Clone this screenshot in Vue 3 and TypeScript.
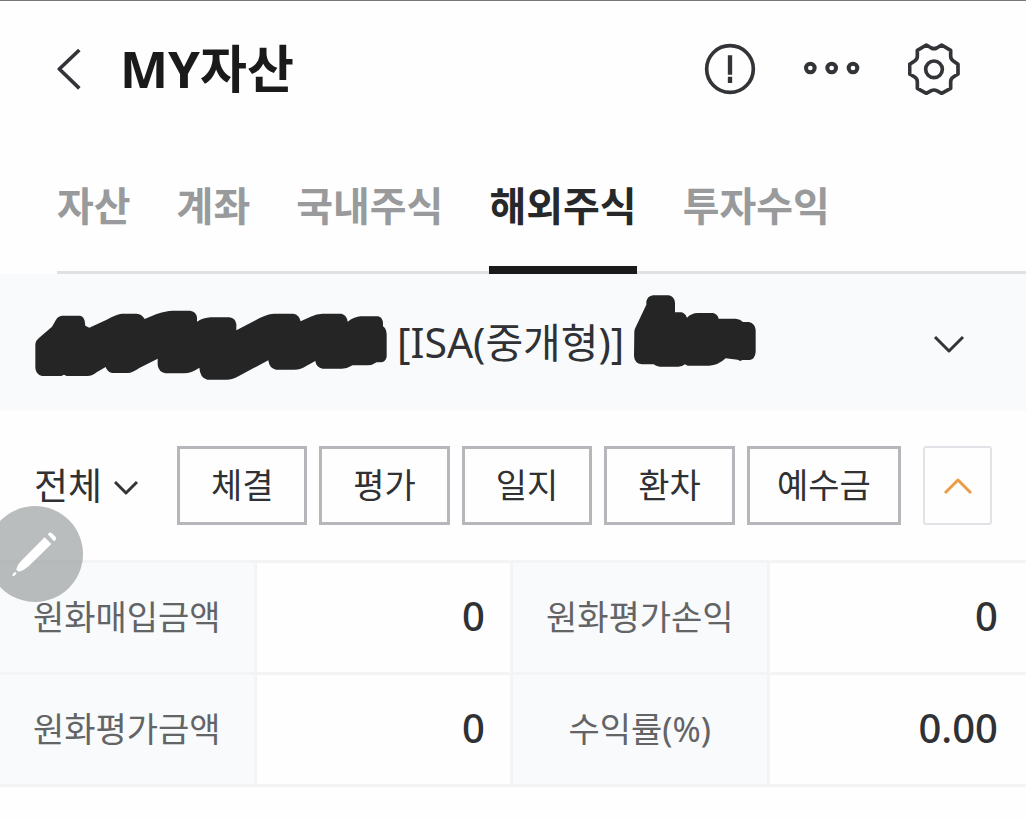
<script setup lang="ts">
import { ref } from 'vue'

interface Metric {
  label: string
  value: string
}

const tabs: string[] = ['자산', '계좌', '국내주식', '해외주식', '투자수익']
const activeTab = ref<string>('해외주식')

const actions: string[] = ['체결', '평가', '일지', '환차', '예수금']
const filter = ref<string>('전체')
const expanded = ref<boolean>(true)

const rows: Metric[][] = [
  [
    { label: '원화매입금액', value: '0' },
    { label: '원화평가손익', value: '0' },
  ],
  [
    { label: '원화평가금액', value: '0' },
    { label: '수익률(%)', value: '0.00' },
  ],
]
</script>

<template>
  <main class="page">
    <header class="header">
      <button class="icon-btn" type="button" aria-label="뒤로">
        <svg width="25" height="46" viewBox="171 137 75 138" class="line">
          <path d="M238 149 L178 206 L238 264" stroke-width="11" />
        </svg>
      </button>
      <h1 class="title">MY자산</h1>
      <div class="tools">
        <button class="icon-btn" type="button" aria-label="안내">
          <svg width="52" height="52" viewBox="71 68 156 156" class="line">
            <circle cx="149" cy="146" r="70" stroke-width="11" />
            <path d="M149 105 V163 M149 169 V188" stroke-width="13" />
          </svg>
        </button>
        <button class="icon-btn" type="button" aria-label="더보기">
          <svg width="58" height="52" viewBox="371 68 174 156" class="line">
            <circle cx="393" cy="143" r="13" stroke-width="12" />
            <circle cx="457" cy="143" r="13" stroke-width="12" />
            <circle cx="521" cy="143" r="13" stroke-width="12" />
          </svg>
        </button>
        <button class="icon-btn" type="button" aria-label="설정">
          <svg width="52" height="52" viewBox="686 68 156 156" class="line">
            <path
              stroke-width="11"
              d="M741 74 L756 83 Q764 87 772 83 L787 74 L814 90 V108 Q814 117 822 122 L836 132 V161 L822 170 Q814 175 814 184 V204 L787 219 L772 211 Q764 207 756 211 L741 219 L714 204 V184 Q714 175 706 170 L691 161 V132 L706 122 Q714 117 714 108 V90 Z"
            />
            <circle cx="764" cy="147" r="25" stroke-width="11" />
          </svg>
        </button>
      </div>
    </header>

    <nav class="tabs">
      <button
        v-for="tab in tabs"
        :key="tab"
        type="button"
        class="tab"
        :class="{ active: tab === activeTab }"
        @click="activeTab = tab"
      >
        {{ tab }}
      </button>
    </nav>

    <button class="account" type="button">
      <svg width="352" height="95" viewBox="47 45 1056 285" class="mask" aria-hidden="true">
        <path
          d="M48 192 Q49 182 58 175 L98 140 L110 119 Q116 108 128 107 H182 Q192 109 196 122 L198 137 L210 143 L262 119 Q292 102 308 101 H352 Q368 102 376 117 L410 103 Q440 92 460 92 H512 Q530 94 533 112 V125 Q552 113 574 112 H630 Q648 114 651 132 V151 L706 122 Q740 102 764 101 H822 Q840 104 844 124 L874 110 Q892 101 910 101 H966 Q982 104 985 125 Q1006 110 1024 109 H1076 Q1090 112 1091 130 V139 Q1101 146 1102 162 V230 Q1099 246 1084 247 H1072 Q1060 256 1044 256 H1000 Q984 266 968 266 H910 Q890 262 888 243 L862 257 Q844 269 826 269 H770 Q750 266 747 241 L660 287 Q640 299 622 299 H564 Q542 294 540 263 Q516 280 494 280 H438 Q418 276 415 255 V236 L360 264 Q338 279 326 279 H278 Q264 276 259 261 L232 277 Q220 288 204 288 H142 L134 284 L126 288 H68 Q50 284 48 264 Z"
        />
      </svg>
      <span class="account-type">[ISA(중개형)]</span>
      <svg width="122" height="95" viewBox="743 45 366 285" class="mask" aria-hidden="true">
        <path
          d="M744 154 Q745 146 750 137 L780 74 V64 Q784 48 800 46 H848 Q864 50 866 68 V97 H886 Q896 100 902 113 Q916 99 934 99 H980 Q994 102 997 116 H1048 Q1062 117 1070 126 H1088 Q1106 130 1108 150 V216 Q1106 238 1090 240 H1068 L1062 243 L1054 239 L1018 235 Q996 256 968 257 H904 L896 253 Q888 260 876 260 H820 Q808 259 802 253 H766 Q744 250 743 228 Z"
        />
      </svg>
      <svg width="32" height="20" viewBox="0 0 32 20" class="line push">
        <path d="M2 4 L16 18 L30 4" stroke-width="3" />
      </svg>
    </button>

    <section class="filters">
      <label class="picker">
        <select v-model="filter" aria-label="구분">
          <option>전체</option>
        </select>
        <svg width="24" height="16" viewBox="0 0 24 16" class="line">
          <path d="M1 2 L12 13 L23 2" stroke-width="3" />
        </svg>
      </label>
      <div class="chips">
        <button v-for="name in actions" :key="name" type="button" class="chip">{{ name }}</button>
      </div>
      <button class="toggle" type="button" aria-label="접기" @click="expanded = !expanded">
        <svg width="30" height="18" viewBox="0 0 30 18" class="line orange">
          <path d="M2 16 L15 3 L28 16" stroke-width="3" />
        </svg>
      </button>
    </section>

    <table v-if="expanded" class="summary">
      <tbody>
        <tr v-for="(row, i) in rows" :key="i">
          <template v-for="cell in row" :key="cell.label">
            <th scope="row">{{ cell.label }}</th>
            <td>{{ cell.value }}</td>
          </template>
        </tr>
      </tbody>
    </table>

    <button class="pen" type="button" aria-label="편집">
      <svg width="96" height="96" viewBox="-37 227 288 288">
        <path
          d="M145 312 L149 308 Q153 305 157 308 L169 320 Q172 324 169 328 L164 333 Z M136 321 L156 341 L88 408 Q74 421 58 424 L51 418 Q53 404 66 391 Z M47 424 L52 429 L45 436 L39 438 L40 432 Z"
          fill="#fff"
        />
      </svg>
    </button>
  </main>
</template>

<style>
body {
  margin: 0;
  background: #fefefe;
}
</style>

<style scoped>
.page {
  position: relative;
  border-top: 1px solid #777;
  color: #2f3134;
  font-family: 'Noto Sans', 'Noto Sans CJK KR', sans-serif;
}

button,
select {
  margin: 0;
  padding: 0;
  border: 0;
  background: none;
  color: inherit;
  font: inherit;
  cursor: pointer;
}

svg {
  display: block;
  flex: none;
}

.line {
  fill: none;
  stroke: #323437;
  stroke-linejoin: round;
}

.header {
  display: flex;
  align-items: center;
  height: 136px;
  padding: 0 66px 0 57px;
}

.title {
  margin: 0 0 0 38px;
  padding-bottom: 2px;
  color: #1a1a1a;
  font-size: 51px;
  font-weight: 700;
  line-height: 72px;
}

.tools {
  display: flex;
  gap: 47px;
  margin-left: auto;
}

.tabs {
  display: flex;
  gap: 46px;
  height: 134px;
  margin-left: 57px;
  border-bottom: 3px solid #dfe1e4;
}

.tab {
  height: 137px;
  padding-top: 4px;
  border-bottom: 8px solid transparent;
  color: #989a9c;
  font-size: 40px;
  font-weight: 700;
  white-space: nowrap;
}

.tab.active {
  border-bottom-color: #1a1a1a;
  color: #27282a;
}

.account {
  display: flex;
  align-items: center;
  gap: 10px;
  width: 100%;
  height: 137px;
  padding: 0 61px 0 35px;
  background: #f8fafc;
  font-size: 41px;
  white-space: nowrap;
}

.account-type {
  padding-bottom: 6px;
}

.mask {
  fill: #252525;
}

.push {
  margin-left: auto;
}

.filters {
  display: flex;
  align-items: center;
  height: 149px;
  padding: 0 34px;
}

.picker {
  position: relative;
  flex: none;
  width: 143px;
}

.picker select {
  width: 104px;
  appearance: none;
  font-size: 37px;
  line-height: 52px;
}

.picker svg {
  position: absolute;
  top: 20px;
  left: 80px;
  pointer-events: none;
}

.chips {
  display: flex;
  flex: 1;
  gap: 12px;
}

.chip {
  flex: 1 0 130px;
  box-sizing: border-box;
  height: 79px;
  padding: 0 27px 4px;
  border: 3px solid #b5b7ba;
  font-size: 34px;
}

.chip:last-child {
  flex-basis: 154px;
}

.toggle {
  display: grid;
  place-items: center;
  box-sizing: border-box;
  width: 69px;
  height: 79px;
  margin-left: 22px;
  border: 2px solid #e1e3e6;
  border-radius: 3px;
}

.orange {
  stroke: #ec9c46;
}

.summary {
  width: 100%;
  border-collapse: separate;
  border-spacing: 0;
  border-bottom: 3px solid #f3f4f6;
  table-layout: fixed;
}

.summary th,
.summary td {
  box-sizing: border-box;
  height: 112px;
  padding: 0 0 4px;
  border-top: 3px solid #f3f4f6;
  border-right: 3px solid #f3f4f6;
}

.summary th {
  background: #f8fafc;
  color: #636466;
  font-size: 34px;
  font-weight: 400;
  white-space: nowrap;
}

.summary td {
  padding-right: 25px;
  font-size: 40px;
  font-weight: 500;
  text-align: right;
}

.summary td:last-child {
  padding-right: 28px;
  border-right: 0;
}

.pen {
  position: absolute;
  top: 505px;
  left: -13px;
  border-radius: 50%;
  background: rgba(140, 145, 145, 0.6);
}
</style>
